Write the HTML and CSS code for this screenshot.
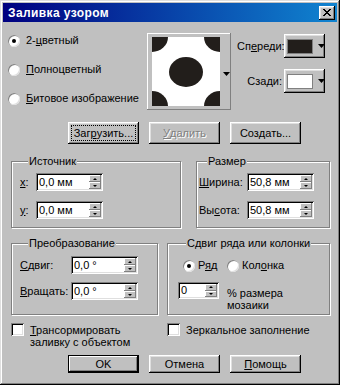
FILE: index.html
```html
<!DOCTYPE html>
<html lang="ru">
<head>
<meta charset="utf-8">
<title>Заливка узором</title>
<link rel="stylesheet" href="styles.css">
</head>
<body>
<div class="window">
  <div class="titlebar">
    <span class="title">Заливка узором</span>
    <span class="close"><svg width="8" height="7" viewBox="0 0 8 7" shape-rendering="crispEdges"><path d="M0 0h2v1h1v1h2v-1h1v-1h2v1h-1v1h-1v1h-1v1h1v1h1v1h1v1h-2v-1h-1v-1h-2v1h-1v1h-2v-1h1v-1h1v-1h1v-1h-1v-1h-1v-1h-1z" fill="#000"/></svg></span>
  </div>

  <div class="top">
    <div class="radios">
      <div class="opt"><span class="radio checked"></span><span>2-<u>ц</u>ветный</span></div>
      <div class="opt"><span class="radio"></span><span><u>П</u>олноцветный</span></div>
      <div class="opt"><span class="radio"></span><span><u>Б</u>итовое изображение</span></div>
    </div>
    <div class="preview">
      <svg class="pattern" width="68" height="69" viewBox="0 0 68 69">
        <rect width="68" height="69" fill="#fff"/>
        <ellipse cx="34" cy="35" rx="17" ry="15" fill="#221e1b"/>
        <ellipse cx="0" cy="0" rx="16" ry="15" fill="#221e1b"/>
        <ellipse cx="68" cy="0" rx="16" ry="15" fill="#221e1b"/>
        <ellipse cx="0" cy="69" rx="16" ry="15" fill="#221e1b"/>
        <ellipse cx="68" cy="69" rx="16" ry="15" fill="#221e1b"/>
      </svg>
      <svg class="arrow" width="7" height="4" viewBox="0 0 7 4"><path d="M0 0h7l-3.5 4z" fill="#000"/></svg>
    </div>
    <div class="colors">
      <span class="clabel">Сп<u>е</u>реди:</span>
      <span class="cbtn"><span class="swatch dark"></span><svg class="arrow" width="7" height="4" viewBox="0 0 7 4"><path d="M0 0h7l-3.5 4z" fill="#000"/></svg></span>
      <span class="clabel">Сза<u>д</u>и:</span>
      <span class="cbtn"><span class="swatch light"></span><svg class="arrow" width="7" height="4" viewBox="0 0 7 4"><path d="M0 0h7l-3.5 4z" fill="#000"/></svg></span>
    </div>
  </div>

  <div class="btnrow upper">
    <button class="btn"><span class="focus">Заг<u>р</u>узить...</span></button>
    <button class="btn disabled"><span><u>У</u>далить</span></button>
    <button class="btn"><span>Соз<u>д</u>ать...</span></button>
  </div>

  <div class="grouprow row1">
    <div class="group g-source">
      <div class="gtitle">Источник</div>
      <div class="frow">
        <span class="flabel"><u>x</u>:</span>
        <span class="field"><span class="val">0,0 мм</span><span class="spin"><span class="sb up"></span><span class="sb down"></span></span></span>
      </div>
      <div class="frow">
        <span class="flabel"><u>y</u>:</span>
        <span class="field"><span class="val">0,0 мм</span><span class="spin"><span class="sb up"></span><span class="sb down"></span></span></span>
      </div>
    </div>
    <div class="group g-size">
      <div class="gtitle">Размер</div>
      <div class="frow">
        <span class="flabel"><u>Ш</u>ирина:</span>
        <span class="field"><span class="val">50,8 мм</span><span class="spin"><span class="sb up"></span><span class="sb down"></span></span></span>
      </div>
      <div class="frow">
        <span class="flabel">Вы<u>с</u>ота:</span>
        <span class="field"><span class="val">50,8 мм</span><span class="spin"><span class="sb up"></span><span class="sb down"></span></span></span>
      </div>
    </div>
  </div>

  <div class="grouprow row2">
    <div class="group g-transform">
      <div class="gtitle">Преобразование</div>
      <div class="frow">
        <span class="flabel"><u>С</u>двиг:</span>
        <span class="field"><span class="val">0,0 °</span><span class="spin"><span class="sb up"></span><span class="sb down"></span></span></span>
      </div>
      <div class="frow">
        <span class="flabel"><u>В</u>ращать:</span>
        <span class="field"><span class="val">0,0 °</span><span class="spin"><span class="sb up"></span><span class="sb down"></span></span></span>
      </div>
    </div>
    <div class="group g-offset">
      <div class="gtitle">Сдвиг ряда или колонки</div>
      <div class="rrow">
        <span class="opt o-row"><span class="radio checked"></span><span>Р<u>я</u>д</span></span>
        <span class="opt"><span class="radio"></span><span>Кол<u>о</u>нка</span></span>
      </div>
      <div class="prow">
        <span class="field small"><span class="val">0</span><span class="spin"><span class="sb up"></span><span class="sb down"></span></span></span>
        <span class="ptext">% размера<br>мозаики</span>
      </div>
    </div>
  </div>

  <div class="checks">
    <div class="chk c1"><span class="box"></span><span class="ctext"><u>Т</u>рансормировать<br>заливку с объектом</span></div>
    <div class="chk"><span class="box"></span><span class="ctext">Зеркальное заполнение</span></div>
  </div>

  <div class="btnrow lower">
    <button class="btn default"><span>OK</span></button>
    <button class="btn"><span>Отмена</span></button>
    <button class="btn"><span><u>П</u>омощь</span></button>
  </div>
</div>
</body>
</html>
```
FILE: styles.css
```css
html, body {
  margin: 0;
  background: #fff;
}
body {
  font-family: "Liberation Sans", Arial, sans-serif;
  font-size: 11px;
  color: #000;
}
u { text-decoration: underline; text-underline-offset: 1px; }

.window {
  width: 340px;
  height: 385px;
  box-sizing: border-box;
  padding: 3px;
  background: #c0c0c0;
  box-shadow: inset -1px -1px #000, inset 1px 1px #dfdfdf, inset -2px -2px #808080, inset 2px 2px #fff;
  display: flex;
  flex-direction: column;
}

.titlebar {
  height: 19px;
  flex: none;
  display: flex;
  align-items: center;
  justify-content: space-between;
  padding: 0 2px 0 5px;
  background: linear-gradient(90deg, #000080, #1084d0);
}
.title {
  color: #fff;
  font-weight: bold;
  font-size: 12px;
  letter-spacing: 0.4px;
}
.close {
  width: 16px;
  height: 14px;
  box-sizing: border-box;
  background: #c0c0c0;
  box-shadow: inset -1px -1px #000, inset 1px 1px #fff, inset -2px -2px #808080, inset 2px 2px #dfdfdf;
  display: flex;
  align-items: center;
  justify-content: center;
}
.close svg { display: block; margin-left: -1px; }

/* top section */
.top {
  margin-top: 11px;
  height: 77px;
  display: flex;
  flex: none;
}
.radios {
  width: 144px;
  box-sizing: border-box;
  padding: 1px 0 0 5px;
  display: flex;
  flex-direction: column;
  gap: 16px;
}
.opt {
  display: flex;
  align-items: center;
  height: 13px;
  line-height: 13px;
  white-space: nowrap;
}
.radio {
  width: 12px;
  height: 12px;
  flex: none;
  border-radius: 50%;
  background: #fff;
  box-shadow: inset 1px 1px #808080, inset -1px -1px #dfdfdf;
  margin-right: 6px;
  display: flex;
  align-items: center;
  justify-content: center;
}
.radio.checked::after {
  content: "";
  width: 4px;
  height: 4px;
  border-radius: 50%;
  background: #000;
}

.preview {
  width: 84px;
  height: 77px;
  box-sizing: border-box;
  flex: none;
  padding: 4px 0 0 5px;
  box-shadow: inset -1px -1px #808080, inset 1px 1px #fff;
  display: flex;
  align-items: flex-start;
}
.pattern { display: block; flex: none; }
.preview .arrow { margin: 35px 0 0 3px; display: block; }

.colors {
  margin-left: 6px;
  padding-top: 1px;
  display: grid;
  grid-template-columns: 45px 41px;
  column-gap: 2px;
  row-gap: 11px;
  align-items: center;
  align-content: start;
}
.clabel {
  text-align: right;
  white-space: nowrap;
  line-height: 13px;
}
.cbtn {
  height: 24px;
  box-sizing: border-box;
  box-shadow: inset -1px -1px #000, inset 1px 1px #fff, inset -2px -2px #808080, inset 2px 2px #dfdfdf;
  display: flex;
  align-items: center;
  padding-left: 3px;
}
.swatch {
  width: 26px;
  height: 15px;
  box-sizing: border-box;
  border: 1px solid #808080;
}
.swatch.dark { background: #221e1b; }
.swatch.light { background: #fff; }
.cbtn .arrow { margin-left: 5px; display: block; }

/* buttons */
.btnrow {
  display: flex;
  gap: 10px;
  padding-left: 65px;
  flex: none;
}
.upper { margin-top: 12px; }
.lower { margin-top: 7px; }
.btn {
  appearance: none;
  border: none;
  margin: 0;
  padding: 3px;
  width: 71px;
  height: 22px;
  box-sizing: border-box;
  background: #c0c0c0;
  font: inherit;
  color: #000;
  box-shadow: inset -1px -1px #000, inset 1px 1px #fff, inset -2px -2px #808080, inset 2px 2px #dfdfdf;
  display: flex;
}
.lower .btn { height: 18px; padding: 2px; }
.btn > span {
  flex: 1;
  display: flex;
  align-items: center;
  justify-content: center;
  line-height: 13px;
  border: 1px solid transparent;
}
.btn > span.focus { border: 1px dotted #000; }
.btn.disabled { color: #808080; text-shadow: 1px 1px 0 #fff; }
.btn.default {
  box-shadow: inset 0 0 0 1px #000, inset -2px -2px #000, inset 2px 2px #fff, inset -3px -3px #808080;
}

/* group boxes */
.grouprow {
  display: flex;
  padding-left: 8px;
  flex: none;
}
.row1 { margin-top: 17px; gap: 15px; }
.row2 { margin-top: 15px; gap: 9px; }
.group {
  box-sizing: border-box;
  border: 1px solid #808080;
  box-shadow: inset 1px 1px #fff, 1px 1px #fff;
  display: flex;
  flex-direction: column;
}
.gtitle {
  align-self: flex-start;
  margin: -7px 0 0 8px;
  padding: 0 1px;
  line-height: 13px;
  height: 13px;
  background: #c0c0c0;
  white-space: nowrap;
}
.row1 .group { height: 67px; }
.row2 .group { height: 72px; }
.g-source { width: 170px; padding-left: 8px; }
.g-size { width: 134px; padding-left: 2px; }
.g-transform { width: 147px; padding-left: 8px; }
.g-offset { width: 163px; padding-left: 10px; }

.frow {
  display: flex;
  align-items: center;
  height: 18px;
  white-space: nowrap;
}
.row1 .frow { margin-top: 10px; }
.row1 .frow:nth-child(2) { margin-top: 5px; }
.row2 .frow { margin-top: 8px; }
.row2 .frow:nth-child(2) { margin-top: 6px; }
.g-source .flabel { width: 16px; }
.g-size .flabel { width: 48px; }
.g-transform .flabel { width: 51px; }

.field {
  width: 67px;
  height: 18px;
  box-sizing: border-box;
  padding: 2px;
  background: #fff;
  box-shadow: inset 1px 1px #808080, inset -1px -1px #fff, inset 2px 2px #000, inset -2px -2px #dfdfdf;
  display: flex;
  align-items: center;
}
.field .val {
  flex: 1;
  padding-left: 1px;
  line-height: 13px;
}
.field.small { width: 41px; height: 17px; }
.spin {
  width: 12px;
  align-self: stretch;
  display: flex;
  flex-direction: column;
}
.sb {
  flex: 1;
  background: #c0c0c0;
  box-shadow: inset -1px -1px #808080, inset 1px 1px #fff;
  display: flex;
  align-items: center;
  justify-content: center;
}
.sb::after {
  content: "";
  width: 0;
  height: 0;
  border-left: 2px solid transparent;
  border-right: 2px solid transparent;
}
.sb.up::after { border-bottom: 2px solid #000; }
.sb.down::after { border-top: 2px solid #000; }

.rrow {
  display: flex;
  margin-top: 9px;
  padding-left: 5px;
}
.rrow .radio { margin-right: 3px; }
.o-row { width: 44px; }
.prow {
  display: flex;
  align-items: flex-start;
  margin-top: 10px;
}
.ptext {
  margin: 5px 0 0 8px;
  line-height: 12px;
}

/* check boxes */
.checks {
  display: flex;
  margin-top: 8px;
  padding-left: 8px;
  flex: none;
}
.chk {
  display: flex;
  align-items: flex-start;
}
.c1 { width: 156px; }
.box {
  width: 13px;
  height: 13px;
  flex: none;
  box-sizing: border-box;
  background: #fff;
  box-shadow: inset 1px 1px #808080, inset -1px -1px #fff, inset 2px 2px #000, inset -2px -2px #dfdfdf;
  margin-right: 6px;
}
.ctext {
  line-height: 12px;
  margin-top: 1px;
  white-space: nowrap;
}
```
